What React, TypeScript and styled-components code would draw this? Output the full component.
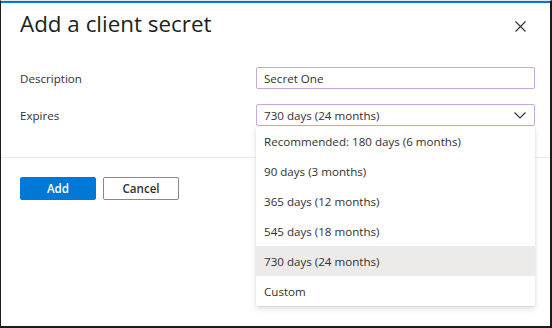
import React, { useState } from 'react';
import styled, { createGlobalStyle } from 'styled-components';

const GlobalStyle = createGlobalStyle`
  html, body {
    margin: 0;
    padding: 0;
    background: #ffffff;
  }
  body {
    font-family: "Open Sans", "Noto Sans", sans-serif;
    color: #323130;
  }
`;

const Frame = styled.div`
  position: relative;
  width: 552px;
  height: 328px;
  box-sizing: border-box;
  border-top: 1px solid #e6e6e6;
  border-left: 1px solid #1b1b1b;
  border-right: 2px solid #1b1b1b;
  border-bottom: 2px solid #1b1b1b;
  background: #ffffff;
  overflow: hidden;
`;

const TopAccent = styled.div`
  height: 2px;
  background: #0078d4;
`;

const Header = styled.div`
  display: flex;
  justify-content: space-between;
  align-items: flex-start;
  padding: 7px 22px 0 19px;
`;

const Title = styled.h1`
  margin: 0;
  font-size: 22.4px;
  line-height: 28px;
  font-weight: 400;
  color: #201f1e;
`;

const CloseButton = styled.button`
  display: flex;
  align-items: center;
  justify-content: center;
  width: 16px;
  height: 16px;
  margin-top: 8px;
  padding: 0;
  border: none;
  background: transparent;
  color: #323130;
  cursor: pointer;
`;

const Form = styled.div`
  display: grid;
  grid-template-columns: 236px 279px;
  row-gap: 15px;
  margin-top: 29px;
  padding-left: 19px;
`;

const Label = styled.label`
  display: flex;
  align-items: center;
  font-size: 11.6px;
  color: #323130;
`;

const TextInput = styled.input`
  box-sizing: border-box;
  width: 100%;
  height: 22px;
  padding: 0 7px;
  border: 1px solid #c9a6db;
  border-radius: 2px;
  font-family: "Open Sans", "Noto Sans", sans-serif;
  font-size: 11.6px;
  color: #323130;
  outline: none;
`;

const SelectWrap = styled.div`
  position: relative;
`;

const SelectBox = styled.div`
  box-sizing: border-box;
  display: flex;
  align-items: center;
  justify-content: space-between;
  height: 22px;
  padding: 0 8px 0 7px;
  border: 1px solid #c9a6db;
  border-radius: 2px;
  font-size: 11.6px;
  color: #323130;
  cursor: pointer;
`;

const Menu = styled.ul`
  position: absolute;
  top: 100%;
  left: 0;
  right: 0;
  z-index: 2;
  margin: 0;
  padding: 0;
  list-style: none;
  background: #ffffff;
  box-shadow: 0 3px 6px rgba(0, 0, 0, 0.1), 0 0.6px 1.8px rgba(0, 0, 0, 0.09);
`;

const MenuItem = styled.li<{ $selected?: boolean }>`
  display: flex;
  align-items: center;
  height: 30px;
  padding-left: 8px;
  font-size: 11.6px;
  color: #323130;
  background: ${p => (p.$selected ? '#edebe9' : '#ffffff')};
`;

const Divider = styled.div`
  height: 1px;
  margin-top: 31px;
  background: #edebe9;
`;

const Footer = styled.div`
  display: flex;
  gap: 7px;
  padding: 19px 0 0 19px;
`;

const PrimaryButton = styled.button`
  box-sizing: border-box;
  width: 76px;
  height: 23px;
  border: 1px solid #0078d4;
  border-radius: 2px;
  background: #0078d4;
  color: #ffffff;
  font-family: "Open Sans", "Noto Sans", sans-serif;
  font-size: 11.6px;
  font-weight: 600;
  cursor: pointer;
`;

const DefaultButton = styled(PrimaryButton)`
  border: 1.5px solid #8a8886;
  background: #ffffff;
  color: #323130;
`;

const options = [
  'Recommended: 180 days (6 months)',
  '90 days (3 months)',
  '365 days (12 months)',
  '545 days (18 months)',
  '730 days (24 months)',
  'Custom',
];

function App(): JSX.Element {
  const [description, setDescription] = useState('Secret One');
  const [expires, setExpires] = useState(options[4]);

  return (
    <Frame>
      <GlobalStyle />
      <TopAccent />
      <Header>
        <Title>Add a client secret</Title>
        <CloseButton aria-label="Close">
          <svg width="11" height="11" viewBox="0 0 11 11">
            <path d="M0.5 0.5 L10.5 10.5 M10.5 0.5 L0.5 10.5" stroke="currentColor" strokeWidth="1.1" fill="none" />
          </svg>
        </CloseButton>
      </Header>
      <Form>
        <Label htmlFor="description">Description</Label>
        <TextInput
          id="description"
          value={description}
          onChange={e => setDescription(e.target.value)}
        />
        <Label>Expires</Label>
        <SelectWrap>
          <SelectBox>
            <span>{expires}</span>
            <svg width="12" height="7" viewBox="0 0 12 7">
              <path d="M0.5 0.5 L6 6 L11.5 0.5" stroke="#323130" strokeWidth="1.1" fill="none" />
            </svg>
          </SelectBox>
          <Menu>
            {options.map(option => (
              <MenuItem
                key={option}
                $selected={option === expires}
                onClick={() => setExpires(option)}
              >
                {option}
              </MenuItem>
            ))}
          </Menu>
        </SelectWrap>
      </Form>
      <Divider />
      <Footer>
        <PrimaryButton>Add</PrimaryButton>
        <DefaultButton>Cancel</DefaultButton>
      </Footer>
    </Frame>
  );
}

export default App;
